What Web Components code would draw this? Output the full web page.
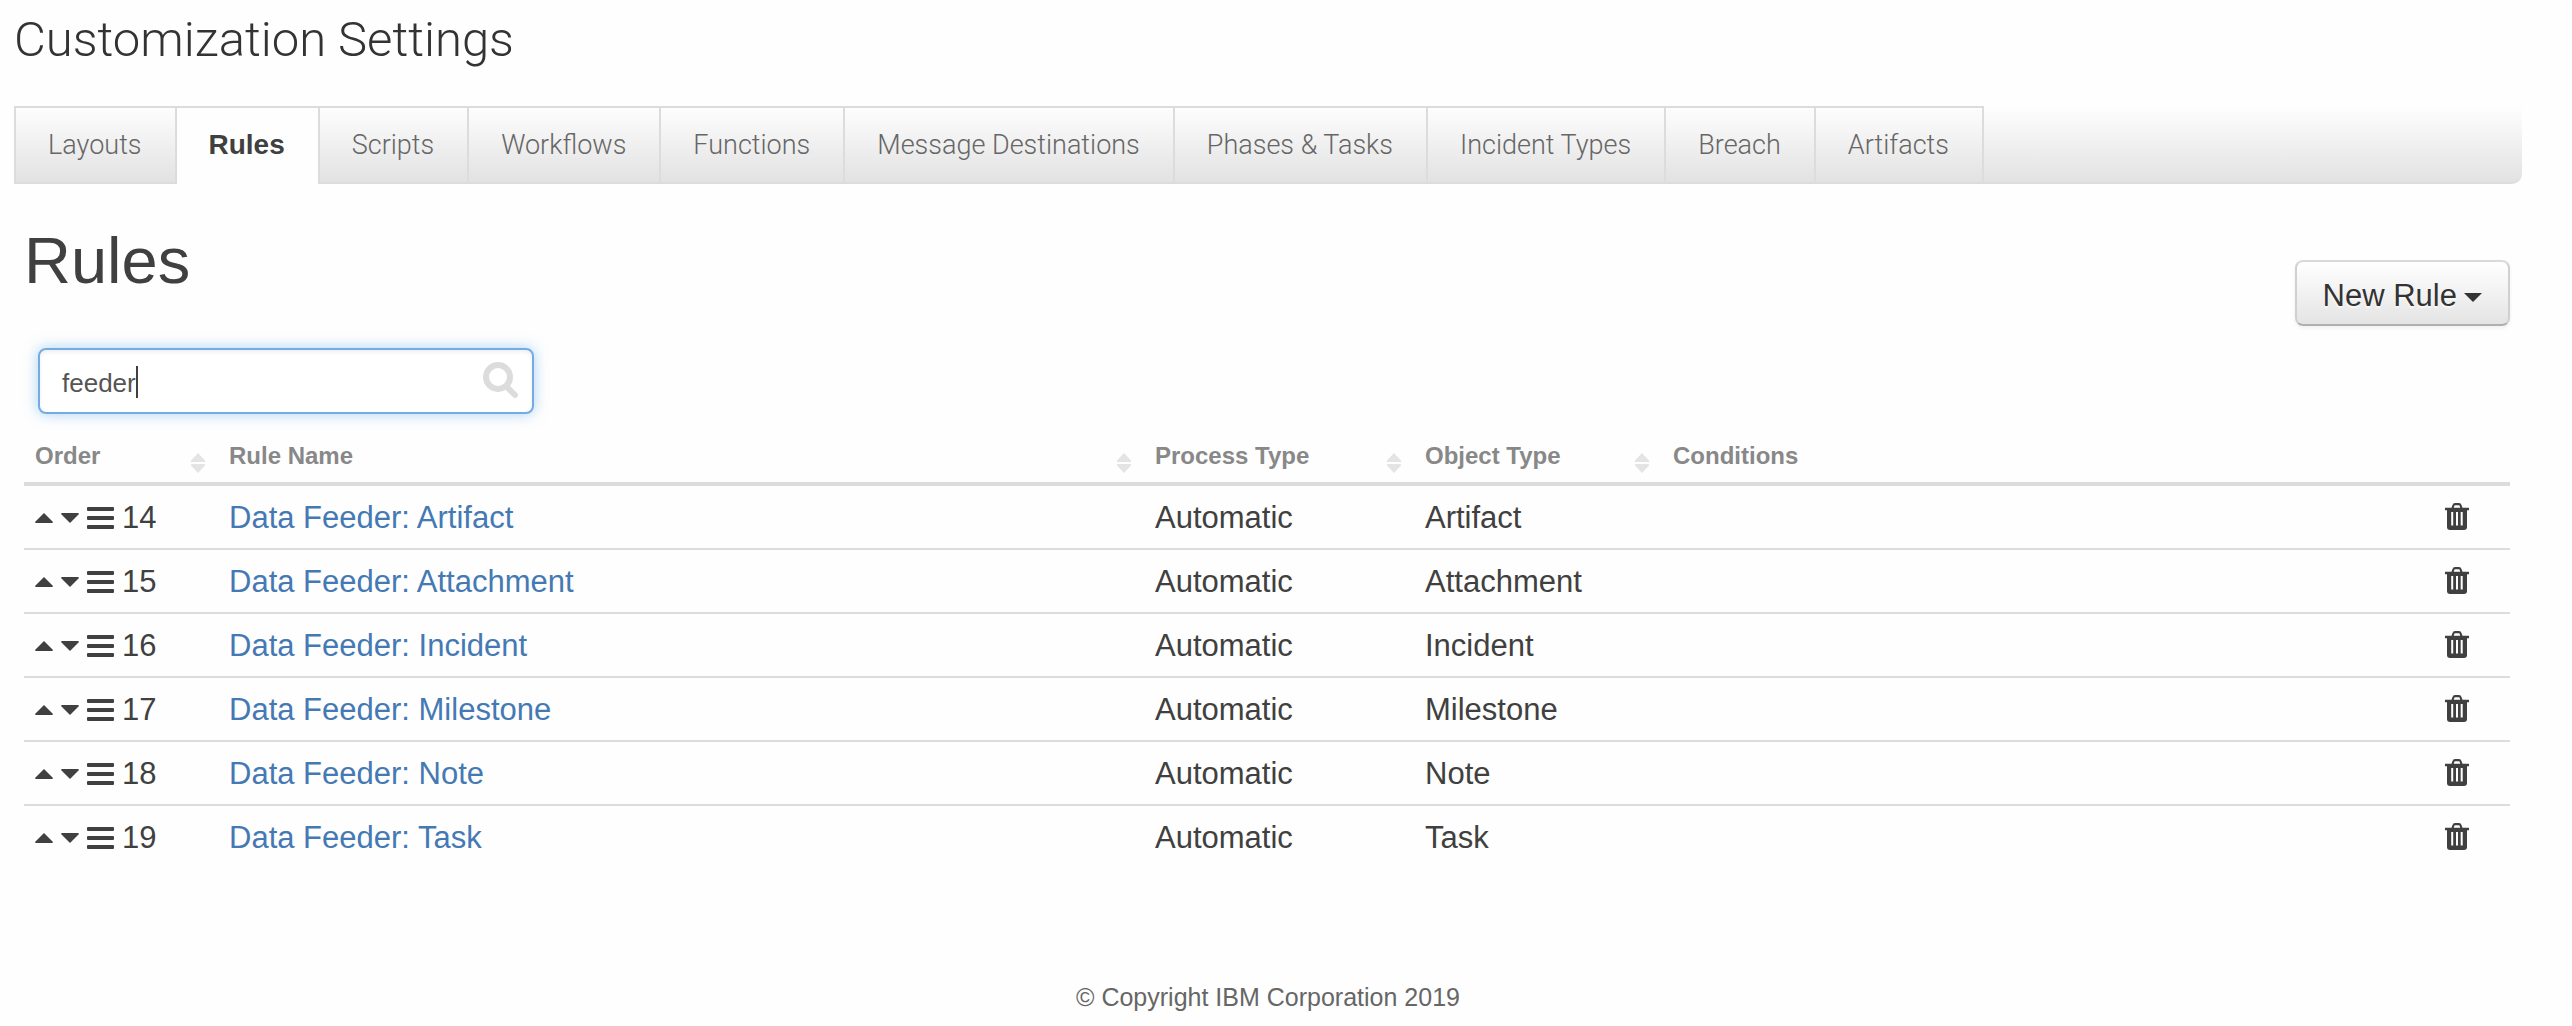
<!DOCTYPE html>
<html lang="en">
<head>
<meta charset="utf-8">
<title>Customization Settings</title>
<style>
  body {
    margin: 0;
    background: #fefefe;
    color: #404040;
    font: 31px/40px "Liberation Sans", Arial, sans-serif;
  }
</style>
</head>
<body>
<settings-page>
  <settings-tabs slot="tabs">
    <settings-tab>Layouts</settings-tab>
    <settings-tab active>Rules</settings-tab>
    <settings-tab>Scripts</settings-tab>
    <settings-tab>Workflows</settings-tab>
    <settings-tab>Functions</settings-tab>
    <settings-tab>Message Destinations</settings-tab>
    <settings-tab>Phases &amp; Tasks</settings-tab>
    <settings-tab>Incident Types</settings-tab>
    <settings-tab>Breach</settings-tab>
    <settings-tab>Artifacts</settings-tab>
  </settings-tabs>
  <menu-button slot="action">New Rule</menu-button>
  <search-box value="feeder"></search-box>
  <rules-table></rules-table>
  <span slot="footer">© Copyright IBM Corporation 2019</span>
</settings-page>

<script>
  const define = (name, html, setup) => {
    const template = document.createElement('template');
    template.innerHTML = html;
    customElements.define(name, class extends HTMLElement {
      connectedCallback() {
        if (this.shadowRoot) return;
        this.attachShadow({ mode: 'open' }).append(template.content.cloneNode(true));
        if (setup) setup(this, this.shadowRoot);
      }
    });
  };

  define('settings-page', `
    <style>
      :host { display: block; padding: 0 50px 0 14px; }
      h1 { margin: 0; padding: 8px 0 34px; font: 300 49px/64px Roboto, sans-serif; color: #333; }
      main { padding: 40px 12px 0 10px; }
      .head { display: flex; justify-content: space-between; align-items: flex-end; height: 102px; }
      h2 { margin: 0; align-self: flex-start; font-size: 65px; line-height: 74px; font-weight: 400; }
      footer { padding-top: 111px; text-align: center; font-size: 25px; line-height: 32px; color: #666; }
    </style>
    <h1>Customization Settings</h1>
    <slot name="tabs"></slot>
    <main>
      <div class="head"><h2>Rules</h2><slot name="action"></slot></div>
      <slot></slot>
    </main>
    <footer><slot name="footer"></slot></footer>`);

  define('settings-tabs', `
    <style>
      :host { display: block; }
      nav {
        display: flex; height: 78px; box-sizing: border-box;
        border-bottom: 2px solid #dcdcdc; border-radius: 0 0 10px 0;
        background: linear-gradient(#fefefe, #e2e2e2);
      }
      ::slotted(:first-child) { border-left: 2px solid #dcdcdc; }
    </style>
    <nav><slot></slot></nav>`);

  define('settings-tab', `
    <style>
      :host {
        display: block; height: 78px; box-sizing: border-box;
        border-top: 2px solid #dcdcdc; border-right: 2px solid #dcdcdc;
        font: 300 27px/74px Roboto, sans-serif;
      }
      :host([active]) { background: #fefefe; font: 700 28px/74px "Liberation Sans", Arial, sans-serif; }
      a { display: block; padding: 0 33px 0 32px; color: #666; text-decoration: none; white-space: nowrap; }
      :host([active]) a { color: #404040; }
    </style>
    <a href="#"><slot></slot></a>`);

  define('menu-button', `
    <style>
      :host { display: block; }
      button {
        display: flex; align-items: center; gap: 7px; height: 66px; padding: 5px 26px 0;
        border: 2px solid; border-color: #dadada #d0d0d0 #b0b0b0; border-radius: 8px;
        background: linear-gradient(#fff, #e4e4e4);
        box-shadow: 0 2px 4px rgba(0, 0, 0, .06);
        font: inherit; color: #333; text-shadow: 0 2px 2px rgba(255, 255, 255, .75);
      }
      svg { display: block; margin-top: 4px; fill: #333; }
    </style>
    <button type="button" aria-haspopup="true"><slot></slot><svg width="18" height="9" viewBox="0 0 18 9"><path d="M0 0h18L9 9z"/></svg></button>`);

  define('search-box', `
    <style>
      :host { display: block; padding: 22px 14px 20px; }
      .field { position: relative; width: 496px; }
      input {
        display: block; width: 100%; height: 66px; box-sizing: border-box; margin: 0;
        padding: 4px 60px 0 22px; border: 2px solid #74abe4; border-radius: 8px;
        background: #fff; box-shadow: inset 0 2px 4px rgba(0, 0, 0, .07), 0 0 14px rgba(82, 168, 236, .5);
        font: 26px/32px "Liberation Sans", Arial, sans-serif; color: #555; outline: none; caret-color: transparent;
      }
      .caret { position: absolute; left: 98px; top: 18px; width: 2px; height: 32px; background: #404040; }
      svg { position: absolute; right: 15px; top: 14px; }
    </style>
    <div class="field">
      <input type="text" aria-label="Search">
      <span class="caret"></span>
      <svg width="36" height="36" viewBox="0 0 36 36" fill="none" stroke="#dcdcdc" stroke-linecap="round"><circle cx="15" cy="15" r="12" stroke-width="6"/><path d="M25 26l7 7" stroke-width="6"/></svg>
    </div>`, (host, root) => { root.querySelector('input').value = host.getAttribute('value') || ''; });

  const sortIcon = '<svg class="sort" width="16" height="20" viewBox="0 0 16 20"><path d="M8 0l7 7.500q1 1.500-1 1.500H2q-2 0-1-1.500zM8 20l7-7.500q1-1.500-1-1.500H2q-2 0-1 1.500z"/></svg>';
  const upIcon = '<svg width="18" height="10" viewBox="0 0 18 10"><path d="M9 0l8.500 8.500q.8 1.500-.5 1.500H1q-1.300 0-.5-1.500z"/></svg>';
  const downIcon = '<svg width="18" height="10" viewBox="0 0 18 10"><path d="M9 10L.5 1.500Q-.300 0 1 0h16q1.300 0 .5 1.500z"/></svg>';
  const barsIcon = '<svg width="27" height="22" viewBox="0 0 27 22"><rect width="27" height="4" rx="1"/><rect y="9" width="27" height="4" rx="1"/><rect y="18" width="27" height="4" rx="1"/></svg>';
  const trashIcon = '<svg width="24" height="27" viewBox="0 0 24 27"><path fill-rule="evenodd" d="M0 4.800h6.500L7.500 2Q8.200 0 10 0h4q1.800 0 2.500 2l1 2.800H24v2.400h-2V24q0 3-3 3H5q-3 0-3-3V7.200H0zM8.700 4.800h6.600l-.7-2.100q-.1-.5-.8-.5h-3.600q-.7 0-.8.500zM6.200 9v13.500h2V9zM11 9v13.500h2V9zM15.700 9v13.500h2V9z"/></svg>';

  define('rules-table', `
    <style>
      :host { display: block; }
      table { width: 100%; table-layout: fixed; border-collapse: separate; border-spacing: 0; }
      .order { width: 194px; } .name { width: 926px; } .process { width: 270px; }
      .object { width: 248px; } .actions { width: 76px; }
      th, td { box-sizing: border-box; padding: 0 11px; text-align: left; font-weight: 400; }
      th { height: 52px; border-bottom: 4px solid #dcdcdc; padding-bottom: 4px; font-size: 24px; line-height: 32px; font-weight: 700; color: #888; }
      th div { display: flex; align-items: center; justify-content: space-between; padding-right: 1px; }
      .sort { margin-top: 13px; }
      td { height: 64px; padding-top: 2px; border-bottom: 2px solid #dcdcdc; }
      tr:last-child td { border-bottom-color: transparent; }
      .handle { display: flex; align-items: center; gap: 8px; }
      svg { display: block; flex: none; fill: #404040; }
      th svg.sort { fill: #e4e4e4; }
      button { display: block; margin: 0; padding: 0; border: 0; background: none; }
      td > button { padding-bottom: 3px; }
      a { color: #4479b3; text-decoration: none; }
    </style>
    <table>
      <colgroup><col class="order"><col class="name"><col class="process"><col class="object"><col><col class="actions"></colgroup>
      <thead><tr>
        <th><div>Order${sortIcon}</div></th><th><div>Rule Name${sortIcon}</div></th>
        <th><div>Process Type${sortIcon}</div></th><th><div>Object Type${sortIcon}</div></th>
        <th>Conditions</th><th></th>
      </tr></thead>
      <tbody></tbody>
    </table>`, (host, root) => {
      const types = ['Artifact', 'Attachment', 'Incident', 'Milestone', 'Note', 'Task'];
      root.querySelector('tbody').innerHTML = types.map((type, i) => `
        <tr>
          <td><div class="handle"><button type="button" aria-label="Move up">${upIcon}</button><button type="button" aria-label="Move down">${downIcon}</button>${barsIcon}<span>${14 + i}</span></div></td>
          <td><a href="#">Data Feeder: ${type}</a></td>
          <td>Automatic</td><td>${type}</td><td></td>
          <td><button type="button" aria-label="Delete">${trashIcon}</button></td>
        </tr>`).join('');
    });
</script>
</body>
</html>
